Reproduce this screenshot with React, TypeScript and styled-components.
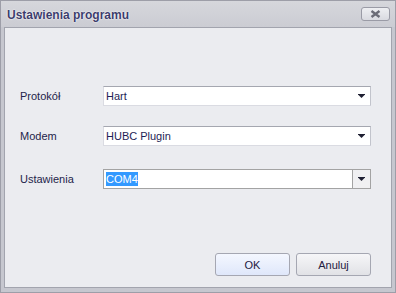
import styled, { createGlobalStyle } from "styled-components";

const GlobalStyle = createGlobalStyle`
  html, body {
    margin: 0;
    padding: 0;
    background: #c4c5cd;
  }
  body {
    font-family: "Liberation Sans", Arial, sans-serif;
  }
`;

interface ComboProps {
  $boxed?: boolean;
}

interface ButtonProps {
  $primary?: boolean;
}

function Arrow() {
  return (
    <svg width="7" height="4" viewBox="0 0 7 4">
      <rect x="0" y="0" width="7" height="1" fill="#1f2033" />
      <path d="M0.5 1 H6.5 L3.5 4 Z" fill="#1f2033" />
    </svg>
  );
}

function CloseIcon() {
  return (
    <svg width="11" height="8" viewBox="0 0 11 8">
      <path
        d="M1.5 1 L9.5 7 M9.5 1 L1.5 7"
        stroke="#6b6c77"
        strokeWidth="2.4"
      />
    </svg>
  );
}

export default function App() {
  return (
    <>
      <GlobalStyle />
      <Window>
        <TitleBar>
          <Title>Ustawienia programu</Title>
          <CloseButton>
            <CloseIcon />
          </CloseButton>
        </TitleBar>
        <Body>
          <Panel>
            <Form>
              <Row>
                <Label>Protokół</Label>
                <Combo>
                  <Value>Hart</Value>
                  <ArrowSlot>
                    <Arrow />
                  </ArrowSlot>
                </Combo>
              </Row>
              <Row>
                <Label>Modem</Label>
                <Combo>
                  <Value>HUBC Plugin</Value>
                  <ArrowSlot>
                    <Arrow />
                  </ArrowSlot>
                </Combo>
              </Row>
              <Row $last>
                <Label>Ustawienia</Label>
                <Combo $boxed>
                  <Value>
                    <Selected>COM4</Selected>
                  </Value>
                  <ArrowSlot $boxed>
                    <Arrow />
                  </ArrowSlot>
                </Combo>
              </Row>
            </Form>
            <ButtonBar>
              <DialogButton $primary>OK</DialogButton>
              <DialogButton>Anuluj</DialogButton>
            </ButtonBar>
          </Panel>
        </Body>
      </Window>
    </>
  );
}

const Window = styled.div`
  width: 396px;
  height: 293px;
  box-sizing: border-box;
  border: 1px solid #9d9ea8;
  background: #c6c7cf;
  display: flex;
  flex-direction: column;
`;

const TitleBar = styled.div`
  height: 26px;
  display: flex;
  align-items: center;
  justify-content: space-between;
  padding: 0 5px 0 6px;
  background: linear-gradient(#d6d7dc, #cbccd3);
`;

const Title = styled.div`
  font-weight: bold;
  font-size: 12px;
  color: #3c3d6c;
  text-shadow: 0 0 2px #ffffff, 0 0 1px #ffffff;
  margin-top: 1px;
`;

const CloseButton = styled.div`
  width: 29px;
  height: 14px;
  box-sizing: border-box;
  border: 1px solid #9a9ba6;
  border-radius: 3px;
  background: linear-gradient(#eeeff2, #d9dae0);
  display: flex;
  align-items: center;
  justify-content: center;
  margin-top: -1px;
`;

const Body = styled.div`
  flex: 1;
  display: flex;
  padding: 0 3px 4px 3px;
`;

const Panel = styled.div`
  flex: 1;
  display: flex;
  flex-direction: column;
  border: 1px solid #a2a4ae;
  background: #ebecf0;
`;

const Form = styled.div`
  display: flex;
  flex-direction: column;
  padding: 58px 20px 0 15px;
`;

const Row = styled.div<{ $last?: boolean }>`
  display: flex;
  align-items: center;
  margin-bottom: ${(p) => (p.$last ? "0" : "20px")};
  &:nth-child(2) {
    margin-bottom: 23px;
  }
`;

const Label = styled.div`
  width: 83px;
  font-size: 11px;
  color: #24244a;
`;

const Combo = styled.div<ComboProps>`
  flex: 1;
  height: 20px;
  box-sizing: border-box;
  display: flex;
  align-items: stretch;
  background: #ffffff;
  border: 1px solid ${(p) => (p.$boxed ? "#a3a3a3" : "#dadbe2")};
  border-top-color: ${(p) => (p.$boxed ? "#a3a3a3" : "#a5a7b0")};
  border-right-color: ${(p) => (p.$boxed ? "#a3a3a3" : "#c2c4cc")};
`;

const Value = styled.div`
  flex: 1;
  display: flex;
  align-items: center;
  padding-left: 2px;
  font-size: 11px;
  color: #1e1e55;
`;

const Selected = styled.span`
  background: #3399ff;
  color: #ffffff;
  padding: 1px 0;
`;

const ArrowSlot = styled.div<ComboProps>`
  width: 17px;
  display: flex;
  align-items: center;
  justify-content: center;
  background: ${(p) => (p.$boxed ? "#f0f0f2" : "transparent")};
  border-left: ${(p) => (p.$boxed ? "1px solid #a3a3a3" : "none")};
`;

const ButtonBar = styled.div`
  margin-top: auto;
  display: flex;
  justify-content: flex-end;
  gap: 6px;
  padding: 0 20px 11px 0;
`;

const DialogButton = styled.div<ButtonProps>`
  width: 75px;
  height: 23px;
  box-sizing: border-box;
  border: 1px solid #a5a7b2;
  border-radius: 3px;
  display: flex;
  align-items: center;
  justify-content: center;
  font-size: 11px;
  color: #1f2040;
  background: ${(p) =>
    p.$primary
      ? "linear-gradient(#f4f7ff, #dfe7fa)"
      : "linear-gradient(#f6f6f8, #e1e2e6)"};
`;
